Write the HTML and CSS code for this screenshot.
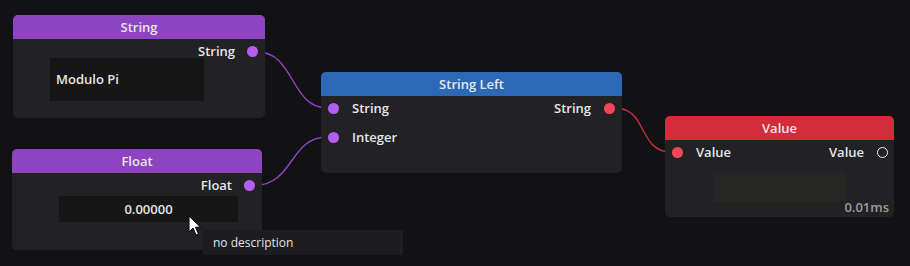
FILE: index.html
```html
<!DOCTYPE html>
<html lang="en">
<head>
  <meta charset="UTF-8" />
  <title>Node Editor</title>
  <link rel="stylesheet" href="styles.css">
</head>
<body>
  <div class="canvas">
    <svg class="wires" width="910" height="266">
      <path class="wire purple" d="M258,52 C294,52 291,108 327,108" />
      <path class="wire purple" d="M256,185 C293,185 290,137 327,137" />
      <path class="wire red" d="M615,108 C648,108 638,152 671,152" />
    </svg>

    <div class="node node-string">
      <div class="node-title">String</div>
      <div class="node-body">
        <div class="row out"><span>String</span><i class="dot violet"></i></div>
        <div class="field field-text">Modulo Pi</div>
      </div>
    </div>

    <div class="node node-float">
      <div class="node-title">Float</div>
      <div class="node-body">
        <div class="row out"><span>Float</span><i class="dot violet"></i></div>
        <div class="field field-num">0.00000</div>
      </div>
    </div>

    <div class="node node-left">
      <div class="node-title">String Left</div>
      <div class="node-body">
        <div class="row">
          <div class="pin"><i class="dot violet"></i><span>String</span></div>
          <div class="pin"><span>String</span><i class="dot coral"></i></div>
        </div>
        <div class="row">
          <div class="pin"><i class="dot violet"></i><span>Integer</span></div>
        </div>
      </div>
    </div>

    <div class="node node-value">
      <div class="node-title">Value</div>
      <div class="node-body">
        <div class="row">
          <div class="pin"><i class="dot coral"></i><span>Value</span></div>
          <div class="pin"><span>Value</span><i class="dot hollow"></i></div>
        </div>
        <div class="field field-preview"></div>
        <div class="timing">0.01ms</div>
      </div>
    </div>

    <div class="tooltip">no description</div>

    <svg class="cursor" width="14" height="22" viewBox="0 0 14 22">
      <path d="M1,1 L1,17 L5,13 L8,20 L10.5,19 L7.5,12.2 L12.5,12.2 Z" fill="#fff" stroke="#000" stroke-width="1" />
    </svg>
  </div>
</body>
</html>
```

FILE: styles.css
```css
body {
  margin: 0;
  background-color: #121214;
  font-family: 'Open Sans', 'Noto Sans', sans-serif;
  font-weight: 600;
  font-size: 13px;
  color: #e6e6e6;
}
.canvas {
  position: relative;
  width: 910px;
  height: 266px;
  overflow: hidden;
}
.wires {
  position: absolute;
  left: 0;
  top: 0;
}
.wire {
  fill: none;
  stroke-width: 1.4;
}
.wire.purple {
  stroke: #9243c6;
}
.wire.red {
  stroke: #c0303c;
}
.node {
  position: absolute;
  background-color: #222224;
  border-radius: 5px;
  overflow: hidden;
  display: flex;
  flex-direction: column;
}
.node-title {
  height: 24px;
  line-height: 24px;
  text-align: center;
}
.node-body {
  flex: 1;
  display: flex;
  flex-direction: column;
}
.row {
  display: flex;
  justify-content: space-between;
  align-items: center;
  height: 24px;
}
.row.out {
  justify-content: flex-end;
  height: 14px;
  gap: 12px;
  padding: 5px 7px 0 0;
}
.pin {
  display: flex;
  align-items: center;
  gap: 13px;
}
.dot {
  display: block;
  width: 11px;
  height: 11px;
  border-radius: 50%;
}
.dot.violet {
  background-color: #b45ef0;
}
.dot.coral {
  background-color: #f04858;
}
.dot.hollow {
  box-sizing: border-box;
  border: 1.6px solid #f0f0f0;
}
.field {
  background-color: #161617;
}

/* String node */
.node-string {
  left: 13px;
  top: 15px;
  width: 252px;
  height: 103px;
}
.node-string .node-title,
.node-float .node-title {
  background-color: #8e43c0;
}
.field-text {
  margin: 0 0 0 37px;
  width: 154px;
  height: 43px;
  box-sizing: border-box;
  padding-left: 6px;
  line-height: 43px;
}

/* Float node */
.node-float {
  left: 12px;
  top: 149px;
  width: 250px;
  height: 101px;
}
.field-num {
  margin: 4px 0 0 47px;
  width: 179px;
  height: 26px;
  line-height: 26px;
  text-align: center;
}

/* String Left node */
.node-left {
  left: 321px;
  top: 72px;
  width: 301px;
  height: 101px;
}
.node-left .node-title {
  background-color: #2b69b6;
}
.node-left .node-body {
  padding: 0 7px 0 7px;
  gap: 5px;
}

/* Value node */
.node-value {
  left: 665px;
  top: 116px;
  width: 229px;
  height: 101px;
}
.node-value .node-title {
  background-color: #d42c3a;
}
.node-value .row {
  padding: 0 6px 0 7px;
}
.field-preview {
  margin: 8px 0 0 48px;
  width: 133px;
  height: 30px;
  background-color: #262624;
}
.timing {
  margin-top: -2px;
  text-align: right;
  padding-right: 5px;
  color: #9c9c9c;
  line-height: 14px;
}

.tooltip {
  position: absolute;
  left: 203px;
  top: 230px;
  width: 200px;
  height: 25px;
  box-sizing: border-box;
  padding-left: 10px;
  line-height: 25px;
  background-color: #1d1d1f;
  font-weight: 400;
  font-size: 12px;
  color: #e4e4e4;
}
.cursor {
  position: absolute;
  left: 188px;
  top: 215px;
}
```
